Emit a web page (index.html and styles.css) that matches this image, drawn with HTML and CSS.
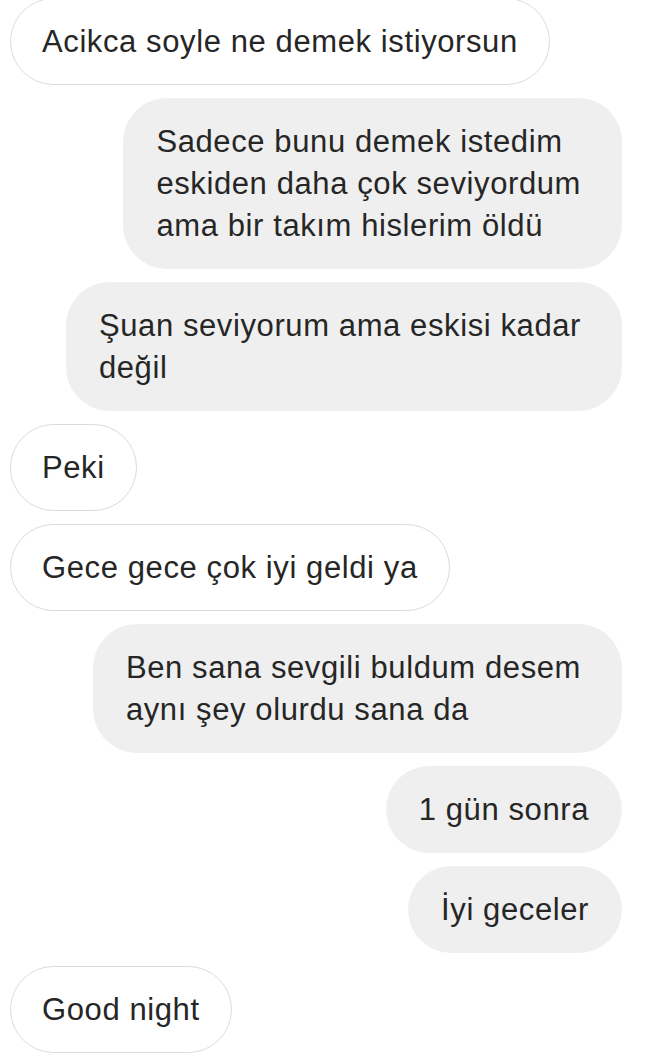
FILE: index.html
```html
<!DOCTYPE html>
<html lang="tr">
<head>
<meta charset="utf-8">
<title>Chat</title>
<link rel="stylesheet" href="styles.css">
</head>
<body>
<div class="thread">
  <div class="msg in first">Acikca soyle ne demek istiyorsun</div>
  <div class="msg out multi">Sadece bunu demek istedim<br>eskiden daha çok seviyordum<br>ama bir takım hislerim öldü</div>
  <div class="msg out multi">Şuan seviyorum ama eskisi kadar<br>değil</div>
  <div class="msg in">Peki</div>
  <div class="msg in">Gece gece çok iyi geldi ya</div>
  <div class="msg out multi">Ben sana sevgili buldum desem<br>aynı şey olurdu sana da</div>
  <div class="msg out">1 gün sonra</div>
  <div class="msg out">İyi geceler</div>
  <div class="msg in">Good night</div>
</div>
</body>
</html>
```
FILE: styles.css
```css
html, body {
  margin: 0;
  padding: 0;
  background: #ffffff;
}

body {
  font-family: "Liberation Sans", Arial, sans-serif;
  color: #262626;
  overflow: hidden;
}

.thread {
  display: flex;
  flex-direction: column;
  align-items: flex-start;
  gap: 13px;
  padding: 0 25px 0 10px;
}

.msg {
  box-sizing: border-box;
  font-size: 31px;
  letter-spacing: 0.6px;
  line-height: 42px;
  padding: 22.5px 32px;
  border-radius: 44px;
  white-space: nowrap;
}

.first {
  margin-top: -2px;
}

.in {
  background: #ffffff;
  border: 1.5px solid #dbdbdb;
  padding: 21.5px 31px;
}

.out {
  align-self: flex-end;
  background: #efefef;
  padding-left: 33px;
  padding-right: 33px;
}

.out.multi {
  padding-right: 41px;
}
```
